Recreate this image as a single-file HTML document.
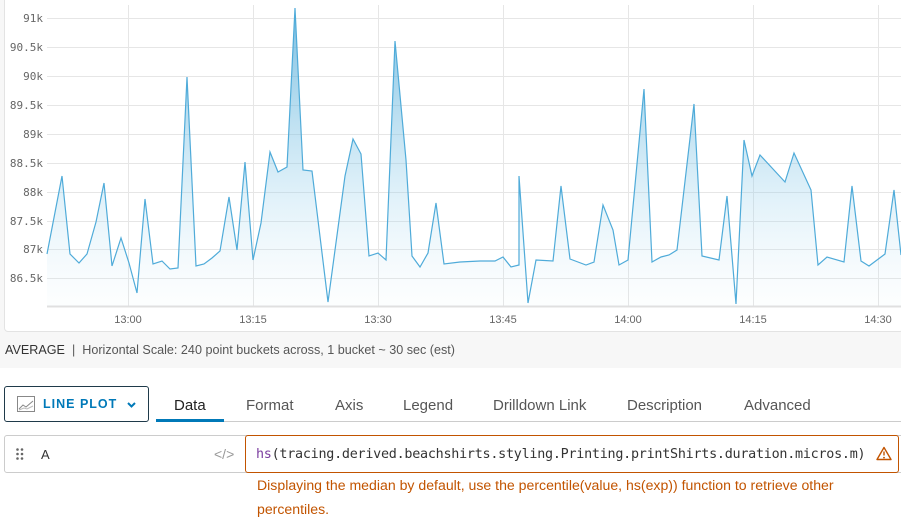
<!DOCTYPE html>
<html><head><meta charset="utf-8"><style>
*{margin:0;padding:0;box-sizing:border-box}
body{width:901px;height:527px;background:#fff;font-family:"Liberation Sans",sans-serif;position:relative;overflow:hidden}
.abs{position:absolute}
.tab{position:absolute;top:397px;font-size:15px;color:#565656}
</style></head><body>
<div class="abs" style="left:0;top:0;width:901px;height:368px;background:#f7f7f7"></div>
<div class="abs" style="left:4px;top:-4px;width:900px;height:336px;background:#fff;border:1px solid #e3e3e3;border-radius:4px"></div>
<svg class="abs" style="left:0;top:0" width="901" height="332">
<defs><linearGradient id="g" x1="0" y1="0" x2="0" y2="1"><stop offset="0" stop-color="#4aa6d6" stop-opacity="0.75"/><stop offset="0.6" stop-color="#8ccbe9" stop-opacity="0.3"/><stop offset="1" stop-color="#cfe9f6" stop-opacity="0.05"/></linearGradient></defs>
<g stroke="#e6e6e6" stroke-width="1">
<line x1="47" y1="18.5" x2="901" y2="18.5"/><line x1="47" y1="47.5" x2="901" y2="47.5"/><line x1="47" y1="76.5" x2="901" y2="76.5"/><line x1="47" y1="105.5" x2="901" y2="105.5"/><line x1="47" y1="134.5" x2="901" y2="134.5"/><line x1="47" y1="163.5" x2="901" y2="163.5"/><line x1="47" y1="192.5" x2="901" y2="192.5"/><line x1="47" y1="221.5" x2="901" y2="221.5"/><line x1="47" y1="249.5" x2="901" y2="249.5"/><line x1="47" y1="278.5" x2="901" y2="278.5"/>
<line x1="128.5" y1="5" x2="128.5" y2="306"/><line x1="253.5" y1="5" x2="253.5" y2="306"/><line x1="378.5" y1="5" x2="378.5" y2="306"/><line x1="503.5" y1="5" x2="503.5" y2="306"/><line x1="628.5" y1="5" x2="628.5" y2="306"/><line x1="753.5" y1="5" x2="753.5" y2="306"/><line x1="878.5" y1="5" x2="878.5" y2="306"/>
</g>
<line x1="47" y1="306.5" x2="901" y2="306.5" stroke="#e0e0e0" stroke-width="2"/>
<polygon fill="url(#g)" points="47,306 47,254 62,176 70,254 79,263 87,254 96,222 104,183 112,266 121,238 129,263 137,293 145,199 153,264 162,261 170,269 178,268 187,77 196,266 204,264 212,258 220,251 229,197 237,250 245,162 253,260 261,223 270,152 278,172 287,167 295,8 303,170 312,171 328,302 345,176 353,139 361,154 369,256 378,253 386,260 395,41 406,160 412,256 420,267 428,253 436,203 444,264 460,262 480,261 495,261 503,257 511,267 519,265 519,176 528,303 536,260 553,261 561,186 570,259 586,265 594,262 603,205 613,230 619,265 628,260 644,89 652,262 661,257 669,255 677,250 694,104 702,256 719,260 727,196 736,304 744,140 752,176 760,155 785,182 794,153 811,190 818,265 827,257 844,262 852,186 861,261 869,266 885,254 894,190 901,255 901,306"/>
<polyline fill="none" stroke="#4fabd9" stroke-width="1.2" points="47,254 62,176 70,254 79,263 87,254 96,222 104,183 112,266 121,238 129,263 137,293 145,199 153,264 162,261 170,269 178,268 187,77 196,266 204,264 212,258 220,251 229,197 237,250 245,162 253,260 261,223 270,152 278,172 287,167 295,8 303,170 312,171 328,302 345,176 353,139 361,154 369,256 378,253 386,260 395,41 406,160 412,256 420,267 428,253 436,203 444,264 460,262 480,261 495,261 503,257 511,267 519,265 519,176 528,303 536,260 553,261 561,186 570,259 586,265 594,262 603,205 613,230 619,265 628,260 644,89 652,262 661,257 669,255 677,250 694,104 702,256 719,260 727,196 736,304 744,140 752,176 760,155 785,182 794,153 811,190 818,265 827,257 844,262 852,186 861,261 869,266 885,254 894,190 901,255"/>
<g font-family="DejaVu Sans Mono,monospace" font-size="11" fill="#666" text-anchor="end">
<text x="43" y="22">91k</text><text x="43" y="51">90.5k</text><text x="43" y="80">90k</text><text x="43" y="109">89.5k</text><text x="43" y="138">89k</text><text x="43" y="167">88.5k</text><text x="43" y="196">88k</text><text x="43" y="225">87.5k</text><text x="43" y="253">87k</text><text x="43" y="282">86.5k</text>
</g>
<g font-family="Liberation Sans,sans-serif" font-size="11" fill="#666" text-anchor="middle">
<text x="128" y="323">13:00</text><text x="253" y="323">13:15</text><text x="378" y="323">13:30</text><text x="503" y="323">13:45</text><text x="628" y="323">14:00</text><text x="753" y="323">14:15</text><text x="878" y="323">14:30</text>
</g>
</svg>
<div class="abs" style="left:5px;top:343px;font-size:12.6px;color:#565656;white-space:nowrap"><span style="color:#333">AVERAGE</span> &nbsp;|&nbsp; Horizontal Scale: 240 point buckets across, 1 bucket ~ 30 sec (est)</div>

<div class="abs" style="left:4px;top:386px;width:145px;height:36px;border:1px solid #1f3a4a;border-radius:3px"></div>
<svg class="abs" style="left:17px;top:396px" width="18" height="16"><rect x="0.5" y="0.5" width="17" height="15" fill="none" stroke="#888"/><polyline points="2,13 6,9 9,11 16,5" fill="none" stroke="#888"/><polyline points="2,14 7,12 10,13 16,10" fill="none" stroke="#bbb"/></svg>
<div class="abs" style="left:43px;top:397px;font-size:12.5px;letter-spacing:1px;color:#0079b8;font-weight:bold">LINE PLOT</div>
<svg class="abs" style="left:127px;top:402px" width="9" height="6"><polyline points="1,1 4.5,4.5 8,1" fill="none" stroke="#0079b8" stroke-width="2"/></svg>

<div class="abs" style="left:156px;top:421px;width:745px;height:1px;background:#ccc"></div>
<div class="abs" style="left:156px;top:419px;width:68px;height:3px;background:#0079b8"></div>
<div class="tab" style="left:174px;color:#222">Data</div>
<div class="tab" style="left:246px">Format</div>
<div class="tab" style="left:335px">Axis</div>
<div class="tab" style="left:403px">Legend</div>
<div class="tab" style="left:493px">Drilldown Link</div>
<div class="tab" style="left:627px">Description</div>
<div class="tab" style="left:744px">Advanced</div>

<div class="abs" style="left:4px;top:435px;width:900px;height:38px;border:1px solid #ccc;border-radius:3px"></div>
<svg class="abs" style="left:16px;top:448px" width="8" height="12" fill="#666"><circle cx="1.5" cy="1.5" r="1.3"/><circle cx="6" cy="1.5" r="1.3"/><circle cx="1.5" cy="6" r="1.3"/><circle cx="6" cy="6" r="1.3"/><circle cx="1.5" cy="10.5" r="1.3"/><circle cx="6" cy="10.5" r="1.3"/></svg>
<div class="abs" style="left:41px;top:447px;font-size:13px;color:#333">A</div>
<div class="abs" style="left:214px;top:446px;font-size:14px;color:#999">&lt;/&gt;</div>
<div class="abs" style="left:245px;top:435px;width:654px;height:38px;border:1px solid #c25400;border-radius:3px;background:#fff"></div>
<div class="abs" style="left:256px;top:447px;font-family:'DejaVu Sans Mono',monospace;font-size:13.4px;color:#333;white-space:nowrap;letter-spacing:-0.25px"><span style="color:#7c3fa0">hs</span>(tracing.derived.beachshirts.styling.Printing.printShirts.duration.micros.m)</div>
<svg class="abs" style="left:876px;top:446px" width="16" height="15"><path d="M8 1.5 L15 13.5 H1 Z" fill="none" stroke="#c25400" stroke-width="1.4" stroke-linejoin="round"/><line x1="8" y1="5.5" x2="8" y2="9.5" stroke="#c25400" stroke-width="1.4"/><circle cx="8" cy="11.6" r="0.9" fill="#c25400"/></svg>
<div class="abs" style="left:257px;top:473px;font-size:14.1px;color:#c25400;line-height:24px;width:640px">Displaying the median by default, use the percentile(value, hs(exp)) function to retrieve other<br>percentiles.</div>
</body></html>
